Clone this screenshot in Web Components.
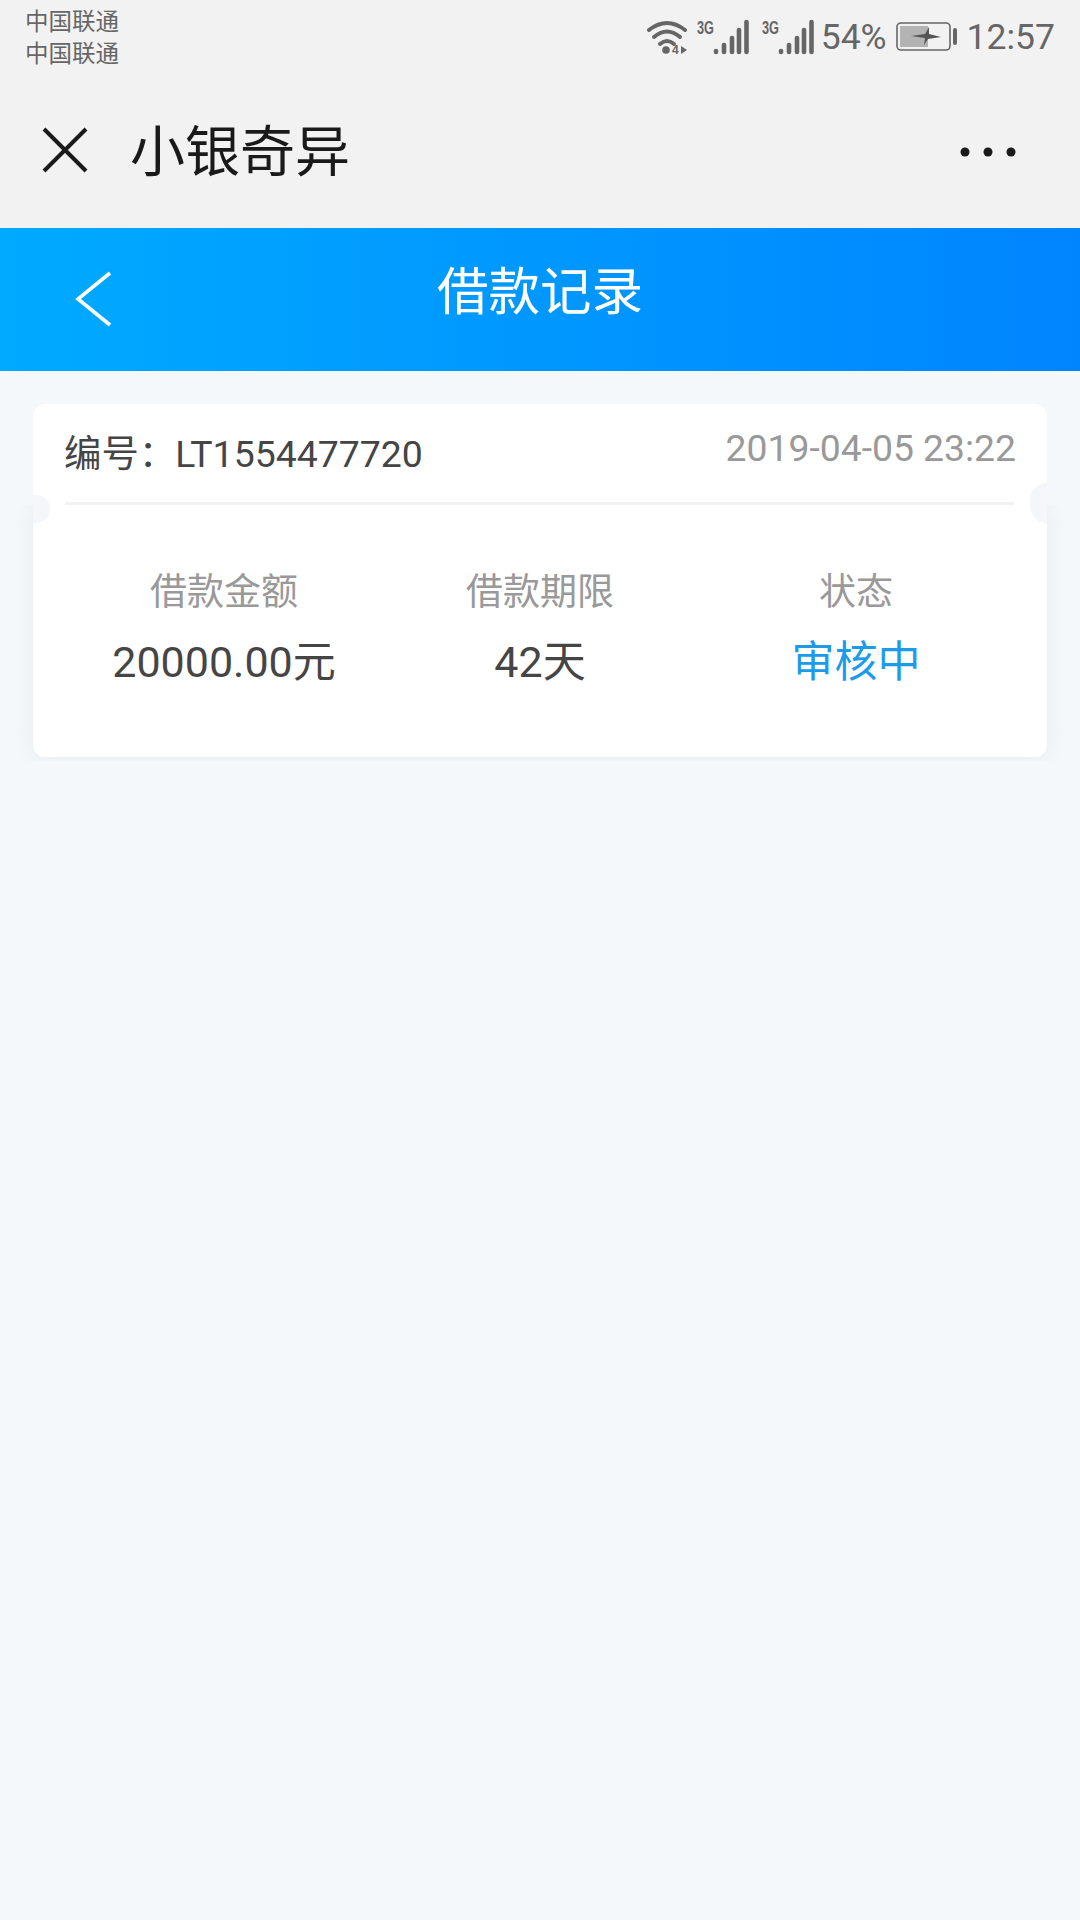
<!DOCTYPE html>
<html lang="zh">
<head>
<meta charset="utf-8">
<title>借款记录</title>
<style>
  html, body {
    margin: 0;
    height: 100%;
  }
  body {
    background: #f4f8fb;
    font-family: Roboto, "Noto Sans CJK SC", sans-serif;
  }
</style>
</head>
<body>
<status-bar></status-bar>
<nav-bar>小银奇异</nav-bar>
<page-header>借款记录</page-header>
<loan-card number="LT1554477720" date="2019-04-05 23:22">
  <loan-stat label="借款金额">20000.00元</loan-stat>
  <loan-stat label="借款期限">42天</loan-stat>
  <loan-stat label="状态" highlight>审核中</loan-stat>
</loan-card>

<script>
// status-bar.js
class StatusBar extends HTMLElement {
  constructor() {
    super();
    const signal = `
      <svg class="signal" width="52" height="44" viewBox="0 -4 52 44">
        <text x="0" y="15" font-family="'Liberation Sans',sans-serif" font-weight="700" font-size="19" fill="#666" textLength="17" lengthAdjust="spacingAndGlyphs">3G</text>
        <g stroke="#666" stroke-width="4.6" stroke-linecap="round">
          <line x1="19" y1="32" x2="19" y2="33"/>
          <line x1="27" y1="26" x2="27" y2="33"/>
          <line x1="35" y1="19" x2="35" y2="33"/>
          <line x1="42" y1="11" x2="42" y2="33"/>
          <line x1="49.5" y1="3" x2="49.5" y2="33"/>
        </g>
      </svg>`;
    this.attachShadow({ mode: "open" }).innerHTML = `
      <style>
        :host {
          display: flex;
          justify-content: space-between;
          align-items: flex-start;
          height: 85px;
          box-sizing: border-box;
          padding: 6px 25px 0 25px;
          background: #f2f2f2;
          color: #666;
          font-family: Roboto, "Noto Sans CJK SC", sans-serif;
        }
        .carriers {
          font-size: 23.5px;
          line-height: 32px;
        }
        .carriers div {
          height: 32px;
        }
        .icons {
          display: flex;
          align-items: center;
          height: 64px;
          margin-top: -1px;
          font-size: 35.5px;
        }
        svg {
          display: block;
          flex: none;
        }
        .wifi { margin-right: 10px; }
        .signal + .signal { margin-left: 13px; }
        .pct { margin-left: 7px; }
        .battery { margin-left: 9px; }
        .time { margin-left: 9px; }
      </style>
      <div class="carriers"><div>中国联通</div><div>中国联通</div></div>
      <div class="icons">
        <svg class="wifi" width="40" height="44" viewBox="0 -4 40 44">
          <g fill="none" stroke="#666" stroke-width="4" stroke-linecap="round">
            <path d="M2 11 Q20 -3 38 11"/>
            <path d="M7 18 Q20 7 33 18"/>
            <path d="M13 25 Q20 19 27 25"/>
          </g>
          <circle cx="19" cy="31" r="3.8" fill="#666"/>
          <text x="25" y="35" font-family="'Liberation Sans',sans-serif" font-weight="700" font-size="12" fill="#666">4</text>
          <path d="M34 27 L40 31 L34 35 Z" fill="#666"/>
        </svg>
        ${signal}${signal}
        <span class="pct">54%</span>
        <svg class="battery" width="62" height="30" viewBox="0 0 62 30">
          <rect x="1" y="1" width="53" height="27" rx="4" fill="none" stroke="#666" stroke-width="1.6"/>
          <rect x="4" y="4" width="28" height="21" fill="#b3b3b3"/>
          <path d="M15 14 L29 12 L33 5 L33 12 L45 15 L32 17 L28 23 L29 16 Z" fill="#555"/>
          <rect x="57" y="6" width="4" height="17" rx="2" fill="#666"/>
        </svg>
        <span class="time">12:57</span>
      </div>
    `;
  }
}
customElements.define("status-bar", StatusBar);

// nav-bar.js
class NavBar extends HTMLElement {
  constructor() {
    super();
    this.attachShadow({ mode: "open" }).innerHTML = `
      <style>
        :host {
          display: flex;
          align-items: center;
          height: 143px;
          box-sizing: border-box;
          padding: 0 64px 10px 42px;
          background: #f2f2f2;
          color: #1a1a1a;
          font-family: Roboto, "Noto Sans CJK SC", sans-serif;
        }
        .title {
          flex: 1;
          margin-left: 42px;
          font-size: 55px;
          line-height: 64px;
        }
        svg { display: block; }
        .close { margin-top: -4px; }
      </style>
      <svg class="close" width="46" height="46" viewBox="0 0 46 46">
        <path d="M2 2 L44 44 M44 2 L2 44" stroke="#1a1a1a" stroke-width="4" fill="none"/>
      </svg>
      <span class="title"><slot></slot></span>
      <svg width="56" height="10" viewBox="0 0 56 10">
        <circle cx="5" cy="5" r="4.5" fill="#1a1a1a"/>
        <circle cx="28" cy="5" r="4.5" fill="#1a1a1a"/>
        <circle cx="51" cy="5" r="4.5" fill="#1a1a1a"/>
      </svg>
    `;
  }
}
customElements.define("nav-bar", NavBar);

// page-header.js
class PageHeader extends HTMLElement {
  constructor() {
    super();
    this.attachShadow({ mode: "open" }).innerHTML = `
      <style>
        :host {
          display: grid;
          grid-template-columns: 1fr auto 1fr;
          align-items: center;
          height: 143px;
          box-sizing: border-box;
          padding: 0 0 14px 74px;
          background: linear-gradient(90deg, #00aaff 0%, #0085ff 100%);
          color: #fff;
          font-family: Roboto, "Noto Sans CJK SC", sans-serif;
        }
        .title {
          margin-left: -74px;
          font-size: 51.5px;
          line-height: 60px;
        }
        svg {
          display: block;
          margin-top: 12px;
        }
      </style>
      <svg width="38" height="56" viewBox="0 0 38 56">
        <path d="M36 2 L4 28 L36 54" stroke="#fff" stroke-width="3.6" fill="none"/>
      </svg>
      <span class="title"><slot></slot></span>
      <span></span>
    `;
  }
}
customElements.define("page-header", PageHeader);

// loan-card.js
class LoanCard extends HTMLElement {
  constructor() {
    super();
    this.attachShadow({ mode: "open" }).innerHTML = `
      <style>
        :host {
          display: block;
          margin: 33px 33px 0;
          font-family: Roboto, "Noto Sans CJK SC", sans-serif;
        }
        .card {
          position: relative;
          background: #fff;
          border-radius: 12px;
        }
        .head {
          display: flex;
          justify-content: space-between;
          align-items: flex-start;
          height: 101px;
          box-sizing: border-box;
          margin: 0 33px 0 32px;
          padding-top: 22px;
          border-bottom: 3px solid #f0f2f4;
        }
        .number {
          margin: 6px 0 0 -1px;
          font-size: 37.4px;
          line-height: 44px;
          color: #454545;
        }
        #number {
          margin-left: -1px;
        }
        .date {
          margin-right: -2px;
          font-size: 37.3px;
          line-height: 44px;
          color: #999;
        }
        .stats {
          display: grid;
          grid-template-columns: repeat(3, 1fr);
          height: 252px;
          box-sizing: border-box;
          padding: 63px 33px 0;
          border-radius: 0 0 12px 12px;
          box-shadow: 0 0 22px rgba(60, 80, 100, .08);
          clip-path: inset(0 -30px -4px -30px);
        }
        .notch {
          position: absolute;
          top: 91px;
          width: 17px;
          height: 28px;
          background: #f4f6f9;
        }
        .notch.left {
          left: 0;
          border-radius: 0 14px 14px 0;
        }
        .notch.right {
          right: 0;
          top: 79px;
          height: 40px;
          border-radius: 20px 0 0 20px;
        }
      </style>
      <div class="card">
        <div class="head">
          <span class="number">编号：<span id="number"></span></span>
          <span class="date" id="date"></span>
        </div>
        <div class="stats"><slot></slot></div>
        <div class="notch left"></div>
        <div class="notch right"></div>
      </div>
    `;
  }

  connectedCallback() {
    this.shadowRoot.getElementById("number").textContent = this.getAttribute("number");
    this.shadowRoot.getElementById("date").textContent = this.getAttribute("date");
  }
}
customElements.define("loan-card", LoanCard);

// loan-stat.js
class LoanStat extends HTMLElement {
  constructor() {
    super();
    this.attachShadow({ mode: "open" }).innerHTML = `
      <style>
        :host {
          display: flex;
          flex-direction: column;
          align-items: center;
          gap: 18.5px;
          color: #454545;
        }
        :host([highlight]) .value {
          color: #1e9be8;
        }
        .label {
          font-size: 37px;
          line-height: 50px;
          color: #999;
        }
        .value {
          font-size: 43px;
          line-height: 50px;
        }
      </style>
      <span class="label" id="label"></span>
      <span class="value"><slot></slot></span>
    `;
  }

  connectedCallback() {
    this.shadowRoot.getElementById("label").textContent = this.getAttribute("label");
  }
}
customElements.define("loan-stat", LoanStat);
</script>
</body>
</html>
